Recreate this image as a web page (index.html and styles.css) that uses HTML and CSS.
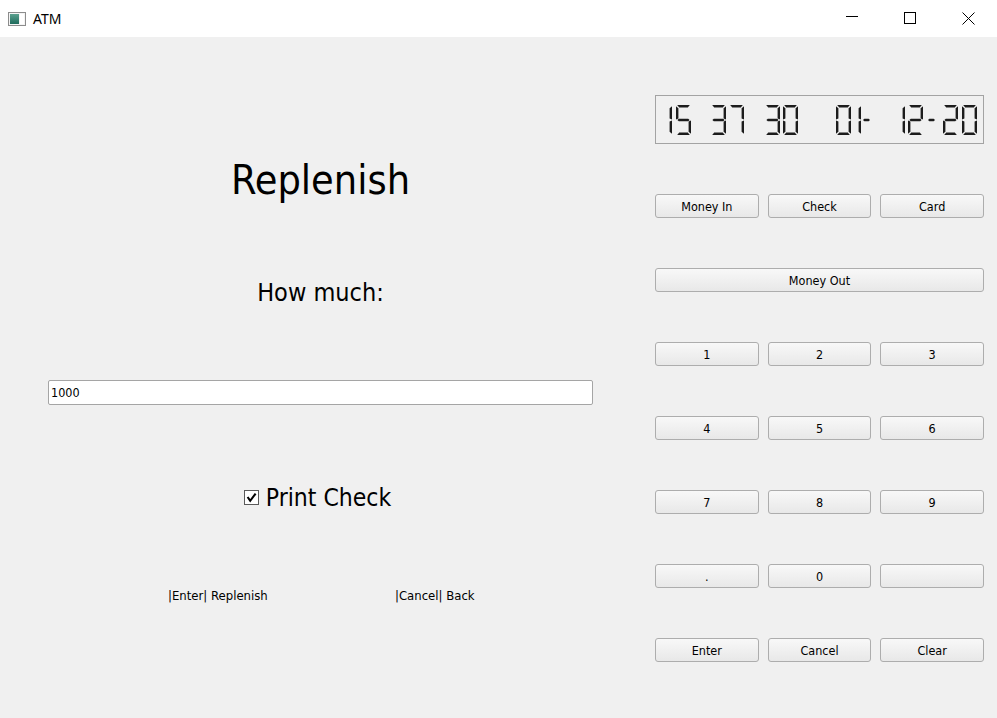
FILE: index.html
```html
<!DOCTYPE html>
<html lang="en">
<head>
<meta charset="utf-8">
<title>ATM</title>
<link rel="stylesheet" href="styles.css">
</head>
<body>
<div class="window">
  <header class="titlebar">
    <svg class="app-icon" viewBox="0 0 18 14" aria-hidden="true">
      <defs>
        <linearGradient id="ig" x1="0" y1="0" x2="0" y2="1">
          <stop offset="0" stop-color="#5aa08e"/>
          <stop offset="1" stop-color="#1f6b5c"/>
        </linearGradient>
      </defs>
      <rect x="0.5" y="0.5" width="17" height="13" fill="#f4f4f4" stroke="#8c8c8c"/>
      <rect x="2" y="2" width="9" height="10" fill="url(#ig)"/>
      <rect x="12" y="2" width="4" height="10" fill="#ffffff"/>
    </svg>
    <span class="title">ATM</span>
    <div class="controls">
      <div class="ctl">
        <svg viewBox="0 0 58 37" aria-hidden="true"><line x1="23" y1="16.5" x2="35" y2="16.5" stroke="#000" stroke-width="1"/></svg>
      </div>
      <div class="ctl">
        <svg viewBox="0 0 58 37" aria-hidden="true"><rect x="23.5" y="12.5" width="11" height="11" fill="none" stroke="#000" stroke-width="1"/></svg>
      </div>
      <div class="ctl">
        <svg viewBox="0 0 58 37" aria-hidden="true"><path d="M23.5 12.5 L35.5 24.5 M35.5 12.5 L23.5 24.5" stroke="#000" stroke-width="1"/></svg>
      </div>
    </div>
  </header>

  <main class="content">
    <section class="left">
      <div class="row row-title"><h1 class="heading">Replenish</h1></div>
      <div class="row row-how"><span class="how">How much:</span></div>
      <div class="row row-input"><input class="amount" type="text" value="1000"></div>
      <div class="row row-check">
        <label class="check">
          <span class="box">
            <svg viewBox="0 0 13 13" aria-hidden="true"><path d="M2.6 6 L5.2 9.8 L10.6 2.6" fill="none" stroke="#000" stroke-width="2.1"/></svg>
          </span>
          <span class="check-text">Print Check</span>
        </label>
      </div>
      <div class="row row-hints">
        <div class="hint hint-enter">|Enter| Replenish</div>
        <div class="hint hint-cancel">|Cancel| Back</div>
      </div>
    </section>

    <section class="right">
      <div class="lcd" aria-label="15 37 30 01-12-20">
        <svg viewBox="0 0 327 47" width="327" height="47" aria-hidden="true">
          <defs>
            <polygon id="sa" points="1.2,0 13.8,0 11.8,2.4 3.2,2.4"/>
            <polygon id="sd" points="3.2,27.6 11.8,27.6 13.8,30 1.2,30"/>
            <polygon id="sf" points="0,1.2 2.4,3.2 2.4,13.6 0,14.6"/>
            <polygon id="se" points="0,15.4 2.4,16.4 2.4,26.8 0,28.8"/>
            <polygon id="sb" points="15,1.2 15,14.6 12.6,13.6 12.6,3.2"/>
            <polygon id="sc" points="15,15.4 15,28.8 12.6,26.8 12.6,16.4"/>
            <polygon id="sg" points="1.4,15 2.8,13.8 12.2,13.8 13.6,15 12.2,16.2 2.8,16.2"/>
            <g id="d0"><use href="#sa"/><use href="#sb"/><use href="#sc"/><use href="#sd"/><use href="#se"/><use href="#sf"/></g>
            <g id="d1"><use href="#sb"/><use href="#sc"/></g>
            <g id="d2"><use href="#sa"/><use href="#sb"/><use href="#sg"/><use href="#se"/><use href="#sd"/></g>
            <g id="d3"><use href="#sa"/><use href="#sb"/><use href="#sg"/><use href="#sc"/><use href="#sd"/></g>
            <g id="d5"><use href="#sa"/><use href="#sf"/><use href="#sg"/><use href="#sc"/><use href="#sd"/></g>
            <g id="d7"><use href="#sa"/><use href="#sb"/><use href="#sc"/></g>
            <polygon id="dash" points="0,15 1.3,13.8 5.7,13.8 7,15 5.7,16.2 1.3,16.2"/>
          </defs>
          <g fill="#1c1c1c">
            <use href="#d1" x="1" y="9"/>
            <use href="#d5" x="20" y="9"/>
            <use href="#d3" x="55" y="9"/>
            <use href="#d7" x="73" y="9"/>
            <use href="#d3" x="109" y="9"/>
            <use href="#d0" x="127" y="9"/>
            <use href="#d0" x="180" y="9"/>
            <use href="#d1" x="190" y="9"/>
            <use href="#dash" x="207" y="9"/>
            <use href="#d1" x="234" y="9"/>
            <use href="#d2" x="252" y="9"/>
            <use href="#dash" x="272" y="9"/>
            <use href="#d2" x="287" y="9"/>
            <use href="#d0" x="306" y="9"/>
          </g>
        </svg>
      </div>
      <div class="keys">
        <button class="key">Money In</button>
        <button class="key">Check</button>
        <button class="key">Card</button>
        <button class="key key-wide">Money Out</button>
        <button class="key">1</button>
        <button class="key">2</button>
        <button class="key">3</button>
        <button class="key">4</button>
        <button class="key">5</button>
        <button class="key">6</button>
        <button class="key">7</button>
        <button class="key">8</button>
        <button class="key">9</button>
        <button class="key">.</button>
        <button class="key">0</button>
        <button class="key"></button>
        <button class="key">Enter</button>
        <button class="key">Cancel</button>
        <button class="key">Clear</button>
      </div>
    </section>
  </main>
</div>
</body>
</html>
```

FILE: styles.css
```css
* { box-sizing: border-box; }

html, body {
  margin: 0;
  padding: 0;
}

body {
  width: 997px;
  height: 718px;
  overflow: hidden;
  background: #f0f0f0;
  font-family: "DejaVu Sans Condensed", "DejaVu Sans", sans-serif;
  color: #000;
}

.window {
  display: flex;
  flex-direction: column;
  height: 718px;
}

.titlebar {
  flex: none;
  height: 37px;
  background: #ffffff;
  display: flex;
  align-items: center;
}

.app-icon {
  width: 18px;
  height: 14px;
  margin-left: 8px;
  margin-right: 7px;
}

.title {
  font-family: "Noto Sans", sans-serif;
  font-size: 14px;
  line-height: 20px;
}

.controls {
  margin-left: auto;
  display: flex;
  height: 100%;
}

.ctl {
  width: 58px;
  height: 37px;
}

.ctl svg {
  display: block;
  width: 58px;
  height: 37px;
}

.content {
  flex: 1;
  display: flex;
  padding-left: 48px;
}

/* left column */
.left {
  width: 545px;
  display: flex;
  flex-direction: column;
}

.row {
  display: flex;
  align-items: center;
  justify-content: center;
}

.row-title {
  height: 60px;
  margin-top: 113px;
}

.heading {
  margin: 0;
  font-weight: normal;
  font-size: 41px;
  line-height: 60px;
}

.row-how {
  height: 60px;
  margin-top: 52px;
}

.how {
  font-size: 25px;
}

.row-input {
  height: 25px;
  margin-top: 58px;
}

.amount {
  width: 545px;
  height: 25px;
  margin: 0;
  border: 1px solid #a5a5a5;
  border-radius: 2px;
  background: #ffffff;
  padding: 0 2px;
  font-family: "DejaVu Sans Condensed", "DejaVu Sans", sans-serif;
  font-size: 12.5px;
  color: #000;
  outline: none;
}

.row-check {
  height: 60px;
  margin-top: 62px;
}

.check {
  display: flex;
  align-items: center;
  margin-right: 6px;
}

.box {
  width: 15px;
  height: 15px;
  border: 1px solid #5a5a5a;
  background: #ffffff;
  margin-right: 7px;
  display: flex;
}

.box svg {
  width: 13px;
  height: 13px;
}

.check-text {
  font-size: 24.5px;
}

.row-hints {
  height: 30px;
  margin-top: 53px;
  justify-content: flex-start;
}

.hint {
  font-size: 13px;
}

.hint-enter {
  width: 272px;
  padding-left: 120px;
}

.hint-cancel {
  padding-left: 75px;
}

/* right column */
.right {
  width: 329px;
  margin-left: 62px;
  padding-top: 58px;
  display: flex;
  flex-direction: column;
  gap: 50px;
}

.lcd {
  height: 49px;
  border: 1px solid #a3a3a3;
  background: #f0f0f0;
}

.lcd svg {
  display: block;
}

.keys {
  display: grid;
  grid-template-columns: repeat(3, 1fr);
  column-gap: 9px;
  row-gap: 50px;
}

.key {
  height: 24px;
  margin: 0;
  padding: 0;
  border: 1px solid #adadad;
  border-radius: 3px;
  background: linear-gradient(#f8f8f8, #e8e8e8);
  font-family: "DejaVu Sans Condensed", "DejaVu Sans", sans-serif;
  font-size: 12.5px;
  color: #000;
}

.key-wide {
  grid-column: 1 / span 3;
}
```
